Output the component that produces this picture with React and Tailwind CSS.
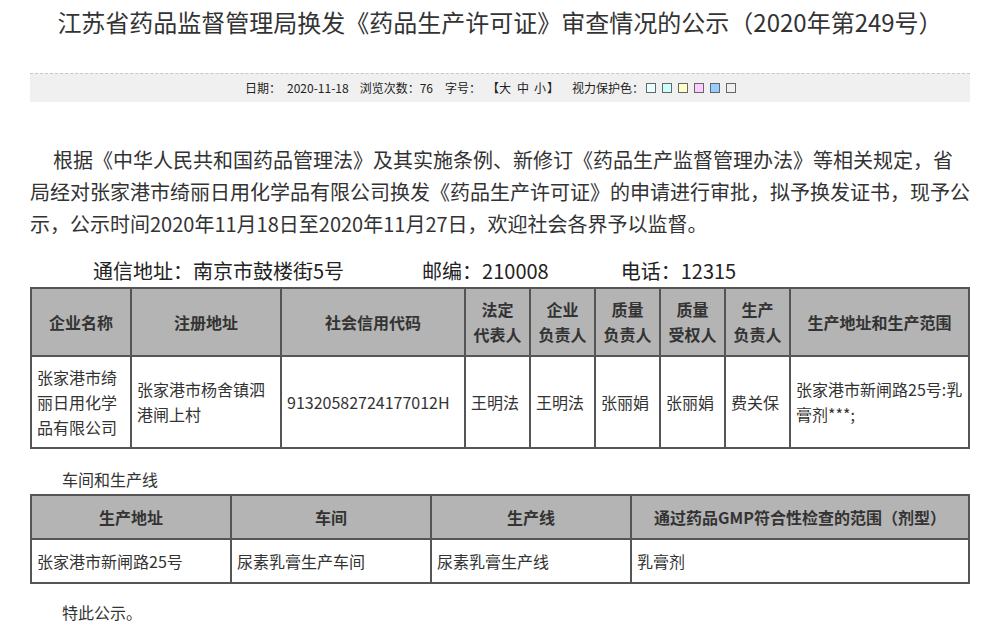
const font = { fontFamily: '"Noto Sans CJK SC", "Noto Sans", sans-serif' };

const colors = ["bg-[#e6ffff]", "bg-[#ccffff]", "bg-[#ffffcc]", "bg-[#ffccff]", "bg-[#99ccff]", "bg-[#f0f0f0]"];

const th = "border-2 border-[#555] bg-[#b4b4b4] font-bold text-center leading-[25px] px-1";
const td = "border-2 border-[#555] text-left leading-[25px] px-[5px] align-middle";

export default function App() {
  return (
    <div className="w-[997px] bg-white text-[#333]" style={font}>
      <div className="ml-[30px] w-[940px] pb-10">
        <h1 className="h-[73px] pt-[8px] text-center text-[24px] leading-[28px] font-normal text-[#333]">
          江苏省药品监督管理局换发《药品生产许可证》审查情况的公示（2020年第249号）
        </h1>

        <div className="h-[29px] border-t border-dashed border-[#c8c8c8] bg-[#f0f0f0] flex items-center pl-[215px] text-[12px] text-[#222]">
          <span>日期：</span>
          <span className="ml-[6px]">2020-11-18</span>
          <span className="ml-[11px]">浏览次数：76</span>
          <span className="ml-[12px]">字号：</span>
          <span className="ml-[6px]">【</span>
          <span>大</span>
          <span className="ml-[6px]">中</span>
          <span className="ml-[5px]">小</span>
          <span className="ml-[1px]">】</span>
          <span className="ml-[13px]">视力保护色：</span>
          <span className="flex gap-[6px] ml-[2px]">
            {colors.map((c) => (
              <span key={c} className={`block w-[10px] h-[10px] border border-[#666] ${c}`} />
            ))}
          </span>
        </div>

        <p className="mt-[42px] text-[20px] leading-[32px] text-[#333] indent-[23px]">
          根据《中华人民共和国药品管理法》及其实施条例、新修订《药品生产监督管理办法》等相关规定，省局经对张家港市绮丽日用化学品有限公司换发《药品生产许可证》的申请进行审批，拟予换发证书，现予公示，公示时间2020年11月18日至2020年11月27日，欢迎社会各界予以监督。
        </p>

        <div className="mt-[19px] text-[20px] leading-[24px] pl-[63px] text-[#222]">
          <span>通信地址：南京市鼓楼街5号</span>
          <span className="ml-[78px]">邮编：210008</span>
          <span className="ml-[72px]">电话：12315</span>
        </div>

        <table className="mt-[4px] w-[940px] border-collapse table-fixed text-[16px] text-[#333]">
          <colgroup>
            <col className="w-[100px]" />
            <col className="w-[150px]" />
            <col className="w-[184px]" />
            <col className="w-[65px]" />
            <col className="w-[65px]" />
            <col className="w-[65px]" />
            <col className="w-[65px]" />
            <col className="w-[65px]" />
            <col />
          </colgroup>
          <thead>
            <tr className="h-[68px]">
              <th className={th}>企业名称</th>
              <th className={th}>注册地址</th>
              <th className={th}>社会信用代码</th>
              <th className={th}>法定<br />代表人</th>
              <th className={th}>企业<br />负责人</th>
              <th className={th}>质量<br />负责人</th>
              <th className={th}>质量<br />受权人</th>
              <th className={th}>生产<br />负责人</th>
              <th className={th}>生产地址和生产范围</th>
            </tr>
          </thead>
          <tbody>
            <tr className="h-[92px]">
              <td className={td}>张家港市绮丽日用化学品有限公司</td>
              <td className={td}>张家港市杨舍镇泗港闸上村</td>
              <td className={td}>91320582724177012H</td>
              <td className={`${td} text-center`}>王明法</td>
              <td className={`${td} text-center`}>王明法</td>
              <td className={`${td} text-center`}>张丽娟</td>
              <td className={`${td} text-center`}>张丽娟</td>
              <td className={`${td} text-center`}>费关保</td>
              <td className={td}>张家港市新闸路25号:乳膏剂***;</td>
            </tr>
          </tbody>
        </table>

        <div className="mt-[18px] pl-[32px] text-[16px] leading-[24px] text-[#333]">车间和生产线</div>

        <table className="mt-[3px] w-[940px] border-collapse table-fixed text-[16px] text-[#333]">
          <colgroup>
            <col className="w-[200px]" />
            <col className="w-[200px]" />
            <col className="w-[200px]" />
            <col />
          </colgroup>
          <thead>
            <tr className="h-[44px]">
              <th className={th}>生产地址</th>
              <th className={th}>车间</th>
              <th className={th}>生产线</th>
              <th className={th}>通过药品GMP符合性检查的范围（剂型）</th>
            </tr>
          </thead>
          <tbody>
            <tr className="h-[44px]">
              <td className={td}>张家港市新闸路25号</td>
              <td className={td}>尿素乳膏生产车间</td>
              <td className={td}>尿素乳膏生产线</td>
              <td className={td}>乳膏剂</td>
            </tr>
          </tbody>
        </table>

        <div className="mt-[16px] pl-[32px] text-[16px] leading-[24px] text-[#333]">特此公示。</div>
      </div>
    </div>
  );
}
